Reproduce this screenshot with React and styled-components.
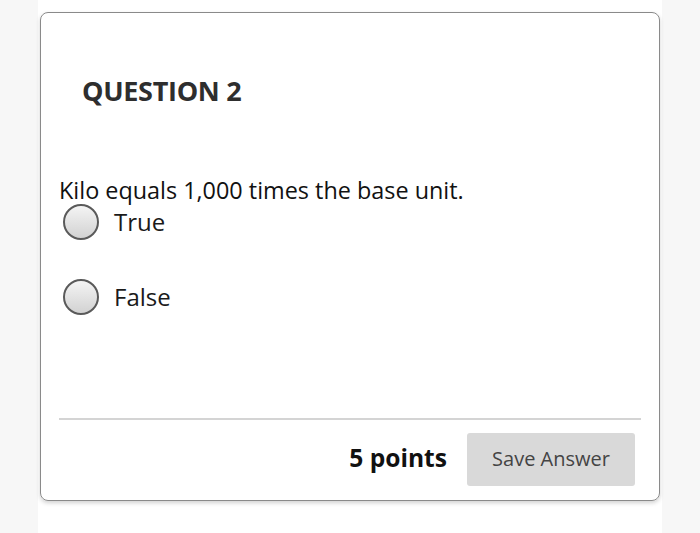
import styled, { createGlobalStyle } from "styled-components"

const GlobalStyle = createGlobalStyle`
  body {
    margin: 0;
    background: #f7f7f7;
    font-family: "Open Sans", "Liberation Sans", sans-serif;
  }
`

const Page = styled.div`
  width: 624px;
  height: 533px;
  margin-left: 38px;
  background: #fff;
  padding-top: 12px;
  box-sizing: border-box;
`
const Card = styled.div`
  margin-left: 2px;
  width: 620px;
  height: 489px;
  box-sizing: border-box;
  border: 1.5px solid #8a8a8a;
  border-radius: 8px;
  box-shadow: 0 2px 4px rgba(0, 0, 0, 0.18);
  display: flex;
  flex-direction: column;
  padding: 0 18px 0 18px;
`
const Title = styled.h2`
  margin: 60px 0 0 23px;
  font-size: 27px;
  line-height: 36px;
  font-weight: 700;
  color: #2e2e2e;
  letter-spacing: -0.3px;
`
const Prompt = styled.p`
  margin: 66px 0 0 0;
  font-size: 23.4px;
  line-height: 30px;
  color: #111;
`
const Options = styled.div`
  display: flex;
  flex-direction: column;
  gap: 39px;
  margin-left: 4px;
  margin-top: -1px;
`
const Option = styled.label`
  display: flex;
  align-items: center;
  gap: 15px;
  font-size: 24px;
  line-height: 34px;
  color: #1a1a1a;
`
const Radio = styled.span`
  width: 32px;
  height: 32px;
  border-radius: 50%;
  border: 2px solid #5a5a5a;
  background: linear-gradient(#f4f4f4, #d2d2d2);
  flex: none;
`
const Footer = styled.div`
  margin-top: auto;
  border-top: 2px solid #d4d4d4;
  display: flex;
  justify-content: flex-end;
  align-items: center;
  gap: 20px;
  padding: 13px 6px 14px 0;
`
const Points = styled.span`
  font-size: 24.6px;
  font-weight: 700;
  color: #111;
  margin-top: -4px;
`
const SaveButton = styled.button`
  width: 168px;
  height: 53px;
  border: none;
  border-radius: 3px;
  background: #d9d9d9;
  color: #444;
  font-family: inherit;
  font-size: 20px;
  padding: 0 0 3px 0;
`

const App = () => {
  return (
    <Page>
      <GlobalStyle />
      <Card>
        <Title>QUESTION 2</Title>
        <Prompt>Kilo equals 1,000 times the base unit.</Prompt>
        <Options>
          <Option>
            <Radio />
            True
          </Option>
          <Option>
            <Radio />
            False
          </Option>
        </Options>
        <Footer>
          <Points>5 points</Points>
          <SaveButton>Save Answer</SaveButton>
        </Footer>
      </Card>
    </Page>
  )
}

export default App
